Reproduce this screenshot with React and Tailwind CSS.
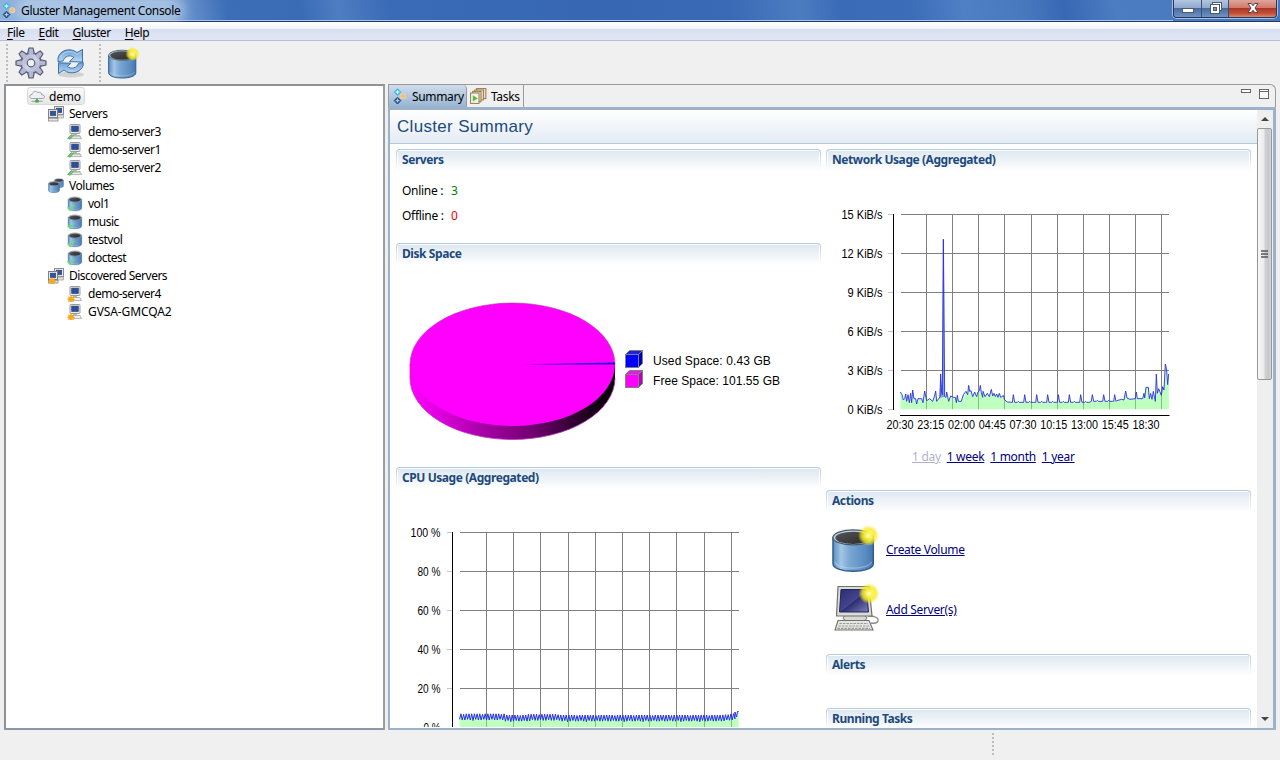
import React from "react";

/* ---------- icons ---------- */

function Defs() {
  return (
    <svg width="0" height="0" className="absolute">
      <defs>
        <linearGradient id="can" x1="0" x2="1" y1="0" y2="0">
          <stop offset="0" stopColor="#5b8ec2" />
          <stop offset="0.2" stopColor="#a3c6e6" />
          <stop offset="0.4" stopColor="#7ba8d4" />
          <stop offset="0.8" stopColor="#5a8cc0" />
          <stop offset="1" stopColor="#4377ae" />
        </linearGradient>
        <linearGradient id="lid" x1="0" x2="1" y1="0" y2="1">
          <stop offset="0" stopColor="#555" />
          <stop offset="1" stopColor="#2a2a2a" />
        </linearGradient>
        <radialGradient id="glow">
          <stop offset="0" stopColor="#ffffe0" />
          <stop offset="0.25" stopColor="#fff45a" />
          <stop offset="0.65" stopColor="#f7ea1e" stopOpacity="0.8" />
          <stop offset="1" stopColor="#f7ea1e" stopOpacity="0" />
        </radialGradient>
        <linearGradient id="steel" x1="0" x2="1" y1="0" y2="1">
          <stop offset="0" stopColor="#8d91b0" />
          <stop offset="0.5" stopColor="#d6d8ea" />
          <stop offset="1" stopColor="#8f93b4" />
        </linearGradient>
        <linearGradient id="arrow" x1="0" x2="0" y1="0" y2="1">
          <stop offset="0" stopColor="#6a9fd6" />
          <stop offset="1" stopColor="#bcd8f2" />
        </linearGradient>
        <linearGradient id="screen" x1="0" x2="1" y1="0" y2="1">
          <stop offset="0" stopColor="#2b2b70" />
          <stop offset="0.5" stopColor="#45458f" />
          <stop offset="0.52" stopColor="#2d2d72" />
          <stop offset="1" stopColor="#7f7fc0" />
        </linearGradient>
        <linearGradient id="rim" x1="0" x2="1" y1="0" y2="0">
          <stop offset="0" stopColor="#ff00ff" />
          <stop offset="0.08" stopColor="#ee00ee" />
          <stop offset="0.35" stopColor="#a800a8" />
          <stop offset="0.6" stopColor="#700070" />
          <stop offset="0.85" stopColor="#220022" />
          <stop offset="1" stopColor="#000" />
        </linearGradient>
      </defs>
    </svg>
  );
}

function GlusterLogo() {
  return (
    <svg width="14" height="17" viewBox="0 0 14 17" className="shrink-0">
      <circle cx="10.2" cy="8.2" r="3" fill="#f3cf98" />
      <path d="M10.2 6v4.4M8 8.2h4.4" stroke="#e2b574" strokeWidth="0.9" />
      <path d="M4.5 0.8 L7.8 4.2 L4.5 7.6 L1.2 4.2 Z" fill="#35b8e4" stroke="#35b8e4" strokeLinejoin="round" />
      <path d="M4.5 2.2v4M2.5 4.2h4" stroke="#d9f4fd" strokeWidth="1.2" />
      <path d="M4.5 9.2 L7.8 12.6 L4.5 16 L1.2 12.6 Z" fill="#184878" stroke="#184878" strokeLinejoin="round" />
      <path d="M4.5 10.6v4M2.5 12.6h4" stroke="#b5cbe2" strokeWidth="1.2" />
    </svg>
  );
}

function Gear() {
  const teeth = [0, 45, 90, 135, 180, 225, 270, 315];
  return (
    <svg width="32" height="32" viewBox="0 0 32 32" className="shrink-0">
      <g stroke="#565a7c" strokeWidth="1.2" strokeLinejoin="round">
        {teeth.map((a) => (
          <path key={a} transform={`rotate(${a} 16 16)`} fill="#a9adc8" d="M12.6 7 L14 1 H18 L19.4 7 Z" />
        ))}
        <circle cx="16" cy="16" r="10" fill="url(#steel)" />
      </g>
      {teeth.map((a) => (
        <path key={a} transform={`rotate(${a} 16 16)`} fill="#b4b8d0" d="M13.4 8 L14.6 2 H17.4 L18.6 8 Z" />
      ))}
      <circle cx="16" cy="16" r="7.5" fill="none" stroke="#c9cce2" strokeWidth="1" />
      <circle cx="16" cy="16" r="3.8" fill="#f0f0f0" stroke="#565a7c" strokeWidth="1.2" />
    </svg>
  );
}

function Refresh() {
  return (
    <svg width="30" height="32" viewBox="0 0 30 32" className="shrink-0">
      <ellipse cx="15" cy="27.5" rx="13" ry="3" fill="#000" opacity="0.12" />
      <g fill="url(#arrow)" stroke="#3a72ae" strokeWidth="1" strokeLinejoin="round">
        <path d="M2 11 C4 2.5 15 0.5 21 5.6 L26.5 2.5 L26.5 15 L13.5 14.6 L17.8 10.3 C14 7.4 8.6 9 7 14 L2 14.6 Z" />
        <path d="M27.2 18 C25.5 25.5 14 28.6 8 23 L2.5 26.5 L2.5 15.8 L15 16.2 L11.3 19.6 C15.6 22.6 21 21 22.4 16.4 L27.2 15.4 Z" />
      </g>
      <path d="M4.5 10 C7 4.5 15 2.6 20.8 7 L25.5 4.6" fill="none" stroke="#b9d7f4" strokeWidth="1" />
    </svg>
  );
}

function Can({ star }) {
  return (
    <g>
      <path d="M1 9 V36 C1 47 43 47 43 36 V9 Z" fill="url(#can)" stroke="#2f5c8c" strokeWidth="1.5" />
      <path d="M3 34.5 C5 43 39 43 41 34.5" fill="none" stroke="#cfe2f3" strokeWidth="1.2" opacity="0.45" />
      <ellipse cx="22" cy="9" rx="21" ry="7.8" fill="#b6d0e8" stroke="#4c5a68" strokeWidth="1.3" />
      <ellipse cx="22" cy="9.4" rx="18.5" ry="6.4" fill="url(#lid)" />
      {star && <circle cx="38" cy="7" r="11" fill="url(#glow)" />}
    </g>
  );
}

function BigVolume({ w, h }) {
  return (
    <svg width={w} height={h} viewBox="0 -5 51 52" className="shrink-0">
      <Can star />
    </svg>
  );
}

function BigServer() {
  return (
    <svg width="49" height="50" viewBox="0 0 49 50" className="shrink-0">
      <path d="M36 33 q11 0 10 5 q-1 3 -7 2" fill="none" stroke="#8b8b8b" strokeWidth="1.3" />
      <ellipse cx="23" cy="35" rx="12" ry="4" fill="#d8d8d4" stroke="#777" />
      <path d="M6 3.5 H37 L40 33 H4.5 Z" fill="#dcdcd6" stroke="#70706c" strokeWidth="1.2" />
      <path d="M9 6.5 H34.5 L36.5 29 H7.5 Z" fill="url(#screen)" stroke="#24245c" />
      <path d="M6 37.5 H37 L41 47 H3 Z" fill="#e4e4e0" stroke="#72726e" strokeWidth="1.1" />
      <path d="M7.5 40.5 H36 M6.5 43 H37 M5.5 45.4 H38" stroke="#9b9b97" strokeWidth="1.1" strokeDasharray="2.5 1" />
      <circle cx="37" cy="10.5" r="10.5" fill="url(#glow)" />
    </svg>
  );
}

function Monitor() {
  return (
    <g>
      <rect x="3" y="0.5" width="10" height="9" rx="0.8" fill="#e8e8e2" stroke="#9a9c9e" />
      <rect x="4.7" y="2.1" width="6.6" height="5.4" fill="#2b4f9b" stroke="#243c78" strokeWidth="0.6" />
      <path d="M6 10 h4 v1.4 h-4z" fill="#b5b5b0" />
      <path d="M3 11.5 H13 L14.5 14.6 H2 Z" fill="#eeeeea" stroke="#a5a5a1" strokeWidth="0.8" />
    </g>
  );
}

const BURST = "M4 9 l1 1.9 2-.7 -.7 2 1.9 1 -1.9 1 .7 2 -2 -.7 -1 1.4 -1 -1.4 -2 .7 .7 -2 -1.9 -1 1.9 -1 -.7 -2 2 .7z";

function TreeIcon({ kind }) {
  return (
    <svg width="16" height="16" viewBox="0 0 16 16" className="shrink-0">
      {kind === "cloud" && (
        <g>
          <path d="M3.5 10.5 C-0.5 10.5 0 6.5 3 6.6 C3.5 3.4 7 2.4 9 4.6 C11.5 3.6 13 5.4 12.6 6.8 C16.5 6.8 16.4 10.5 13 10.5 Z" fill="#edf0f4" stroke="#9aa3b0" />
          <path d="M8 11 V13" stroke="#3e8c3e" strokeWidth="1.4" />
          <path d="M2.5 13.3 H13.5" stroke="#a9a9a9" strokeWidth="1.2" />
          <rect x="6" y="12" width="4" height="2.6" rx="1" fill="#3fae49" />
        </g>
      )}
      {(kind === "servers" || kind === "discovered") && (
        <g>
          <rect x="6.5" y="0.5" width="9" height="8" fill="#e8e8e2" stroke="#8d8f90" />
          <rect x="8.3" y="2.2" width="5.4" height="4.4" fill="#2f559f" stroke="#243c78" strokeWidth="0.6" />
          <rect x="8" y="9" width="7.5" height="3" fill="#dededa" stroke="#9a9a96" strokeWidth="0.7" />
          <rect x="0.5" y="3.5" width="9" height="8" fill="#e8e8e2" stroke="#7d7f80" />
          <rect x="2.3" y="5.2" width="5.4" height="4.4" fill="#2f559f" stroke="#243c78" strokeWidth="0.6" />
          <rect x="0.5" y="12.3" width="9.5" height="2.7" fill="#e6e6e2" stroke="#8a8a86" strokeWidth="0.8" />
          {kind === "discovered" && <path d={BURST} fill="#f9a91c" />}
        </g>
      )}
      {kind === "server" && (
        <g>
          <Monitor />
          <path d="M0.6 14.4 L4.6 10.6 L6.6 11.6 L3.2 15.2 Z" fill="#6cc477" stroke="#57ab63" strokeWidth="0.7" />
          <path d="M6 12.6h7" stroke="#9fcfa3" strokeWidth="0.9" />
        </g>
      )}
      {kind === "found" && (
        <g>
          <Monitor />
          <path d={BURST} fill="#f9a91c" />
        </g>
      )}
      {kind === "volumes" && (
        <g>
          <g transform="translate(6.2 0.3) scale(0.215)"><Can /></g>
          <g transform="translate(0.3 3.2) scale(0.26)"><Can /></g>
        </g>
      )}
      {kind === "volume" && (
        <g>
          <g transform="translate(0.9 0.6) scale(0.32)"><Can /></g>
          <path d="M0.8 11.4 L3 13.8 L7 8.8" fill="none" stroke="#72d680" strokeWidth="1.9" />
        </g>
      )}
    </svg>
  );
}

function TasksIcon() {
  return (
    <svg width="17" height="16" viewBox="0 0 17 16" className="shrink-0">
      <g fill="#eadfc4" stroke="#957a50" strokeWidth="1">
        <rect x="6.5" y="0.6" width="9.4" height="10" />
        <rect x="4.6" y="2" width="8.8" height="10" />
        <rect x="2.6" y="3.4" width="8.4" height="10.4" />
        <rect x="0.6" y="5" width="8.4" height="10.4" fill="#f1f4ea" />
      </g>
      <path d="M2.8 7.3 L7.8 10.4 L2.8 13.5 Z" fill="#62b83c" />
    </svg>
  );
}

/* ---------- window frame ---------- */

function TitleBar() {
  return (
    <div className="flex h-[22px] shrink-0 border-b border-[#1e3c6b] bg-[linear-gradient(80deg,#8fb2dc_0px,#85aad8_165px,#5d89c8_195px,#3c6eb8_225px,#3a6cb6_300px,#4f7dc1_335px,#3a6bb6_385px,#3767b3_600px,#3a6ab5_720px,#4c7cc0_790px,#3a6bb6_830px,#3c6db8_900px,#4f7fc4_950px,#4879bf_1010px,#3868b4_1050px,#4c7cc1_1100px,#4877bb_1280px)]">
      <div className="flex h-[21px] flex-1 items-center gap-[5px] border-b border-[#a9c4e8] pl-[2px]">
        <GlusterLogo />
        <span className="rounded-full bg-white/25 pt-[2px] text-[12px] leading-[16px] tracking-[-0.33px] text-black shadow-[0_0_8px_5px_rgba(255,255,255,0.25)]">
          Gluster Management Console
        </span>
      </div>
      <div className="mr-[3px] flex h-[18px] overflow-hidden rounded-b-[4px] border border-t-0 border-[#26395c] shadow-[0_0_0_1px_rgba(200,220,245,0.7)]">
        <div className="flex w-[28px] justify-center border-r border-[#3a5077] bg-[linear-gradient(#b3c6e0_0%,#8faace_45%,#4a6ba0_50%,#6f93c4_100%)]">
          <svg width="13" height="18" viewBox="0 0 13 18">
            <rect x="1.5" y="8.5" width="11" height="4" fill="#fff" stroke="#515a6b" />
          </svg>
        </div>
        <div className="flex w-[27px] justify-center border-r border-[#3a5077] bg-[linear-gradient(#b3c6e0_0%,#8faace_45%,#4a6ba0_50%,#6f93c4_100%)]">
          <svg width="13" height="18" viewBox="0 0 13 18">
            <rect x="3.5" y="2.5" width="9" height="8" fill="#fff" stroke="#515a6b" />
            <rect x="1.5" y="4.5" width="9" height="9" fill="#fff" stroke="#515a6b" />
            <rect x="4.5" y="7.5" width="3" height="3" fill="#7b93b8" stroke="#515a6b" />
          </svg>
        </div>
        <div className="flex w-[47px] justify-center bg-[linear-gradient(#dfa59b_0%,#cf7a6c_45%,#b13524_50%,#c4523a_80%,#d98a6c_100%)]">
          <svg width="14" height="18" viewBox="0 0 14 18">
            <path d="M2 3.5 H5.3 L7 5.8 L8.7 3.5 H12 L9 8 L12 12.5 H8.7 L7 10.2 L5.3 12.5 H2 L5 8 Z" fill="#fff" stroke="#54414a" />
          </svg>
        </div>
      </div>
    </div>
  );
}

function MenuBar() {
  const items = ["File", "Edit", "Gluster", "Help"];
  return (
    <div className="flex h-[19px] shrink-0 items-center gap-[14px] border-b border-[#b6bccc] bg-[linear-gradient(#ffffff_0%,#f3f6fb_35%,#d8dff0_42%,#e0e6f5_100%)] pt-[2px] pl-[7px] text-[12px] leading-[17px] tracking-[-0.4px]">
      {items.map((t) => (
        <span key={t}>
          <span className="underline underline-offset-2">{t[0]}</span>
          {t.slice(1)}
        </span>
      ))}
    </div>
  );
}

function Grip({ h }) {
  return (
    <svg width="2" height={h} className="shrink-0">
      <path d={`M1 0V${h}`} stroke="#bcbcbc" strokeWidth="2" strokeDasharray="2 2" />
    </svg>
  );
}

function Toolbar() {
  return (
    <div className="flex h-[43px] shrink-0 items-center bg-[#f0f0f0] pl-[6px]">
      <Grip h={38} />
      <div className="flex w-[91px] items-center gap-[9px] pl-[7px]">
        <Gear />
        <Refresh />
      </div>
      <Grip h={38} />
      <div className="pt-[1px] pl-[7px]">
        <BigVolume w={33} h={34} />
      </div>
    </div>
  );
}

/* ---------- tree ---------- */

const TREE = [
  ["cloud", "demo", 0],
  ["servers", "Servers", 1],
  ["server", "demo-server3", 2],
  ["server", "demo-server1", 2],
  ["server", "demo-server2", 2],
  ["volumes", "Volumes", 1],
  ["volume", "vol1", 2],
  ["volume", "music", 2],
  ["volume", "testvol", 2],
  ["volume", "doctest", 2],
  ["discovered", "Discovered Servers", 1],
  ["found", "demo-server4", 2],
  ["found", "GVSA-GMCQA2", 2],
];

const INDENT = ["pl-[21px]", "pl-[42px]", "pl-[61px]"];

function Tree() {
  return (
    <div className="w-[381px] shrink-0 border-2 border-[#8e9196] border-r-[#9a9da1] border-b-[#8c98a6] bg-white pt-[1px]">
      {TREE.map(([kind, label, depth]) => (
        <div key={label} className={"flex h-[18px] items-center text-[12px] leading-[16px] " + INDENT[depth]}>
          <div
            className={
              "flex h-[18px] items-center " +
              (depth === 0
                ? "gap-[4px] rounded-[3px] border border-[#d9d9d9] bg-[linear-gradient(#fafafa,#e6e6e6)] pr-[3px] pl-[1px]"
                : "gap-[5px]")
            }
          >
            <TreeIcon kind={kind} />
            <span
              className={
                label.startsWith("GVSA")
                  ? "tracking-[-0.1px]"
                  : label.startsWith("Disc")
                    ? "tracking-[-0.5px]"
                    : depth === 0
                      ? "pt-[1px] tracking-[-0.2px]"
                      : "tracking-[-0.48px]"
              }
            >
              {label}
            </span>
          </div>
        </div>
      ))}
    </div>
  );
}

/* ---------- summary ---------- */

function Section({ title, className, children }) {
  return (
    <section className={"flex shrink-0 flex-col " + className}>
      <div className="h-[22px] rounded-t-[4px] bg-[linear-gradient(#b3c8dc,#ffffff)] px-[1px] pt-[1px]">
        <div className="h-full rounded-t-[3px] bg-white px-[1px] pt-[1px]">
          <h2 className="h-full bg-[linear-gradient(#dfe8f1,#ffffff)] pl-[4px] text-[12px] leading-[17px] font-bold tracking-[-0.43px] text-[#1c4a7c]">
            {title}
          </h2>
        </div>
      </div>
      {children}
    </section>
  );
}

function Count({ label, value, color }) {
  return (
    <div className="flex h-[25px] items-center text-[12px] tracking-[-0.3px]">
      <span className="w-[49px]">{label} :</span>
      <span className={color}>{value}</span>
    </div>
  );
}

function Cube({ front, top, side }) {
  return (
    <svg width="18" height="18" viewBox="0 0 18 18" className="shrink-0">
      <g stroke="#808080" strokeWidth="1">
        <path d="M0.5 4.5 L4.5 0.5 H17.5 L13.5 4.5 Z" fill={top} />
        <path d="M13.5 4.5 L17.5 0.5 V13.5 L13.5 17.5 Z" fill={side} />
        <rect x="0.5" y="4.5" width="13" height="13" fill={front} />
      </g>
    </svg>
  );
}

function DiskPie() {
  return (
    <div className="flex pt-[37px] pl-[13px]">
      <svg width="208" height="138" viewBox="409 302 208 138" className="shrink-0">
        <path d="M410 364 V378 A102.5 61.5 0 0 0 615 378 V364 Z" fill="url(#rim)" />
        <path d="M410 364 V378 A102.5 61.5 0 0 0 615 378" fill="none" stroke="#c030c0" strokeWidth="0.8" />
        <ellipse cx="512.5" cy="364.5" rx="102.5" ry="61.5" fill="#ff00ff" />
        <path d="M410 364.5 A102.5 61.5 0 0 1 615 364.5" fill="none" stroke="#a040a0" strokeWidth="0.6" />
        <path d="M522 364.6 L615 362.6 V364.4 Z" fill="#2000e8" />
      </svg>
      <div className="flex flex-col gap-[2px] pt-[48px] pl-[8px] font-['Liberation_Sans',sans-serif] text-[12px] leading-[16px] tracking-[0.1px]">
        <div className="flex h-[18px] items-center gap-[10px]">
          <Cube front="#0000ff" top="#2020e0" side="#0000b8" />
          <span className="pt-[3px]">Used Space: 0.43 GB</span>
        </div>
        <div className="flex h-[18px] items-center gap-[10px]">
          <Cube front="#ff00ff" top="#e020e0" side="#bc00bc" />
          <span className="pt-[3px] tracking-[0.05px]">Free Space: 101.55 GB</span>
        </div>
      </div>
    </div>
  );
}

function cpuLine() {
  const pts = [];
  let i = 0;
  for (let x = 459.5; x <= 735; x += 1.35, i++) {
    const early = x < 505 ? -1.2 : x > 528 && x < 560 ? -0.8 : 0;
    const late = x > 722 ? -((x - 722) / 8) : 0;
    const wob = i % 6 === 0 ? -0.7 : i % 7 === 3 ? 0.5 : 0;
    pts.push(`${x.toFixed(1)},${((i % 2 ? 715 : 721.2) + early + late + wob).toFixed(1)}`);
  }
  pts.push("735,712", "736.5,717", "737.5,711.5", "738.7,711.5");
  return pts.join(" ");
}

const CPU = cpuLine();

function CpuChart() {
  const xs = [486.5, 513.5, 540.5, 568.5, 595.5, 622.5, 649.5, 676.5, 704.5, 731.5];
  const rows = [["100 %", 532, 30], ["80 %", 571, 23], ["60 %", 610, 23], ["40 %", 649, 23], ["20 %", 688, 23], ["0 %", 727, 17]];
  return (
    <svg width="424" height="238" viewBox="396 489 424 238" className="shrink-0">
      <g stroke="#808080">
        {xs.map((x) => <path key={x} d={`M${x} 533V727`} />)}
        {rows.map(([t, y]) => <path key={t} d={`M460 ${y + 0.5}H739`} />)}
      </g>
      <g stroke="#c4c4c4">
        {rows.map(([t, y]) => <path key={t} d={`M447 ${y + 0.5}h6`} />)}
      </g>
      <path d="M452.5 532V727" stroke="#000" />
      <polygon points={`459.5,728 ${CPU} 738.7,728`} fill="#80ff80" fillOpacity="0.5" />
      <polyline points={CPU} fill="none" stroke="#2a30e8" strokeWidth="1" />
      <g fontFamily="Liberation Sans, sans-serif" fontSize="12" textAnchor="end">
        {rows.map(([t, y, w]) => (
          <text key={t} x="440.5" y={y + 5} textLength={w} lengthAdjust="spacingAndGlyphs">{t}</text>
        ))}
      </g>
    </svg>
  );
}

/* samples in thirds of a pixel, relative to the plot's own origin */
const NET_HEAD =
  "241,576 246,584 250,600 254,596 257,582 260,604 264,584 268,608 272,580 275,608 278,570 282,596 287,596 290,612 294,596 305,596 309,608 314,573 320,602 329,596 338,604 343,590 347,573 350,604 358,594 360,590 362,522 365,578 367,584 370,118 374,590 378,592 380,576 386,604 392,588 400,592 406,592 409,608 412,586 415,604 424,604 430,584 438,574 443,584 446,556 449,574 453,572 458,590 464,576 470,590 474,576 478,572 481,556 484,578 488,592 489,574 495,590 502,580 508,590 514,568 518,588 522,580 526,590 530,582 534,592 538,580 542,592 546,590 550,586 554,600 562,606 576,607";
const NET_SPIKES = [580, 614, 650, 683, 715, 748, 782, 817, 851, 884];
const NET_TAIL =
  "890,602 905,598 912,600 917,573 921,594 930,598 946,596 949,576 952,596 968,596 972,580 974,594 978,562 985,562 988,596 992,580 996,598 1000,574 1006,604 1009,522 1012,580 1016,566 1024,586 1028,560 1032,570 1036,492 1040,510 1043,554 1046,522";
const NET = [
  NET_HEAD,
  ...NET_SPIKES.map((x, i) => {
    const b = x < 815 ? 607 : 604;
    const rise = `${x - 3},${b} ${x},584 ${x + 4},${b}`;
    return i === NET_SPIKES.length - 1 ? rise : `${rise} ${x + 12},${b} ${x + 15},${b - 3} ${x + 18},${b} ${x + 26},${b}`;
  }),
  NET_TAIL,
].join(" ");

function NetworkChart() {
  const xs = [926.5, 952.5, 978.5, 1004.5, 1031.5, 1057.5, 1083.5, 1109.5, 1135.5, 1161.5];
  const rows = [["15 KiB/s", 214], ["12 KiB/s", 253], ["9 KiB/s", 292], ["6 KiB/s", 331], ["3 KiB/s", 370], ["0 KiB/s", 409]];
  const hours = ["20:30", "23:15", "02:00", "04:45", "07:30", "10:15", "13:00", "15:45", "18:30"];
  return (
    <svg width="424" height="264" viewBox="826 171 424 264" className="shrink-0">
      <g stroke="#808080">
        {xs.map((x) => <path key={x} d={`M${x} 215V409`} />)}
        {rows.slice(0, 5).map(([t, y]) => <path key={t} d={`M901 ${y + 0.5}H1169`} />)}
      </g>
      <g stroke="#c4c4c4">
        {rows.map(([t, y]) => <path key={t} d={`M888 ${y + 0.5}h6`} />)}
      </g>
      <path d="M893.5 214V410M900 415.5H1169.5" stroke="#000" fill="none" />
      <g transform="translate(820 200) scale(0.33333)">
        <polygon points={`241,628 ${NET} 1047,628`} fill="#80ff80" fillOpacity="0.5" />
        <path d="M362 522 L367 584 L369 118 H372 L374 590 L358 594 Z" fill="#4040f0" fillOpacity="0.5" />
        <polyline points={NET} fill="none" stroke="#2a30e0" strokeOpacity="0.9" strokeWidth="3" />
      </g>
      <g fontFamily="Liberation Sans, sans-serif" fontSize="12" textAnchor="end">
        {rows.map(([t, y]) => (
          <text key={t} x="882.5" y={y + 5} textLength={y < 260 ? 41 : 35} lengthAdjust="spacingAndGlyphs">{t}</text>
        ))}
      </g>
      <g fontFamily="Liberation Sans, sans-serif" fontSize="12" textAnchor="middle">
        {hours.map((t, i) => (
          <text key={t} x={900 + i * 30.75} y="429" textLength="27" lengthAdjust="spacingAndGlyphs">{t}</text>
        ))}
      </g>
    </svg>
  );
}

function Tabs() {
  return (
    <div className="flex h-[23px] shrink-0 rounded-tr-[6px] border border-b-0 border-[#9a9a9a] bg-[#f0f0f0] text-[12px] leading-[16px] tracking-[-0.35px]">
      <div className="flex w-[78px] items-center gap-[5px] rounded-tr-[4px] border-r border-[#9a9a9a] bg-[linear-gradient(#cfdcec,#99b4d1)] pl-[4px]">
        <GlusterLogo />
        <span className="pt-[2px]">Summary</span>
      </div>
      <div className="flex w-[57px] items-center gap-[4px] border-r border-[#9a9a9a] pl-[3px]">
        <TasksIcon />
        <span className="pt-[2px]">Tasks</span>
      </div>
      <div className="flex flex-1 items-start justify-end gap-[8px] pt-[4px] pr-[6px]">
        <svg width="10" height="4"><rect x="0.5" y="0.5" width="9" height="3" fill="#fff" stroke="#666" /></svg>
        <svg width="10" height="10"><rect x="0.5" y="0.5" width="9" height="9" fill="#fff" stroke="#666" /><path d="M0 2.5H10" stroke="#666" /></svg>
      </div>
    </div>
  );
}

function ScrollBar() {
  return (
    <div className="flex w-[16px] shrink-0 flex-col items-center bg-[#efefef]">
      <div className="flex h-[18px] items-center pr-[1px]">
        <svg width="8" height="4"><path d="M0 4L4 0L8 4Z" fill="#444" /></svg>
      </div>
      <div className="mr-[1px] flex h-[252px] w-[15px] shrink-0 items-center justify-center rounded-[2px] border border-[#979797] bg-[linear-gradient(90deg,#f7f7f7_0%,#ececec_45%,#d0d1d4_55%,#c6c7ca_85%,#dcdcdc_100%)]">
        <svg width="7" height="8"><path d="M0 1H7M0 4H7M0 7H7" stroke="#555" strokeWidth="1.4" /></svg>
      </div>
      <div className="flex flex-1 items-end pr-[1px] pb-[7px]">
        <svg width="8" height="4"><path d="M0 0L4 4L8 0Z" fill="#444" /></svg>
      </div>
    </div>
  );
}

function Summary() {
  return (
    <div className="flex min-h-0 min-w-0 flex-1 flex-col">
      <Tabs />
      <div className="flex min-h-0 flex-1 border-2 border-t-[3px] border-r-[3px] border-[#9bb2ca] bg-white">
        <div className="flex min-h-0 min-w-0 flex-1 flex-col">
          <div className="h-[34px] shrink-0 border-b border-[#b4c8d8] bg-[linear-gradient(#ffffff,#e3ebf3)] pl-[7px]">
            <h1 className="font-['Liberation_Sans',sans-serif] text-[17px] leading-[33px] tracking-[0.32px] text-[#1c4a7c]">Cluster Summary</h1>
          </div>
          <div className="flex min-h-0 flex-1 gap-[5px] overflow-hidden pt-[5px] pl-[6px]">
            <div className="flex w-[425px] shrink-0 flex-col">
              <Section title="Servers" className="h-[94px]">
                <div className="pt-[7px] pl-[6px]">
                  <Count label="Online" value="3" color="text-[#008000]" />
                  <Count label="Offline" value="0" color="text-[#f00000]" />
                </div>
              </Section>
              <Section title="Disk Space" className="h-[224px]">
                <DiskPie />
              </Section>
              <Section title="CPU Usage (Aggregated)" className="h-[260px]">
                <CpuChart />
              </Section>
            </div>
            <div className="flex w-[425px] shrink-0 flex-col">
              <Section title="Network Usage (Aggregated)" className="h-[341px]">
                <NetworkChart />
                <div className="flex gap-[6px] pt-[13px] pl-[86px] text-[12px] leading-[18px] tracking-[-0.3px] text-[#000080]">
                  <span className="text-[#b4b0d0] underline">1 day</span>
                  <span className="underline">1 week</span>
                  <span className="underline">1 month</span>
                  <span className="underline">1 year</span>
                </div>
              </Section>
              <Section title="Actions" className="h-[164px]">
                <div className="flex flex-col gap-[9px] pt-[12px] pl-[6px] text-[12px] tracking-[-0.32px] text-[#000080]">
                  <div className="flex items-center gap-[5px]">
                    <BigVolume w={49} h={50} />
                    <span className="pt-[2px] underline">Create Volume</span>
                  </div>
                  <div className="flex items-center gap-[5px]">
                    <BigServer />
                    <span className="pt-[4px] underline">Add Server(s)</span>
                  </div>
                </div>
              </Section>
              <Section title="Alerts" className="h-[54px]" />
              <Section title="Running Tasks" className="h-[40px]" />
            </div>
          </div>
        </div>
        <ScrollBar />
      </div>
    </div>
  );
}

export default function App() {
  return (
    <div className="flex h-[760px] w-[1280px] flex-col overflow-hidden bg-[#f0f0f0] font-['Noto_Sans','Open_Sans',sans-serif] text-black">
      <Defs />
      <TitleBar />
      <MenuBar />
      <Toolbar />
      <div className="flex h-[646px] shrink-0 gap-[3px] pr-[4px] pl-[4px]">
        <Tree />
        <Summary />
      </div>
      <div className="flex flex-1 items-start bg-[#f0f0f0] pt-[3px] pl-[992px]">
        <Grip h={22} />
      </div>
    </div>
  );
}
